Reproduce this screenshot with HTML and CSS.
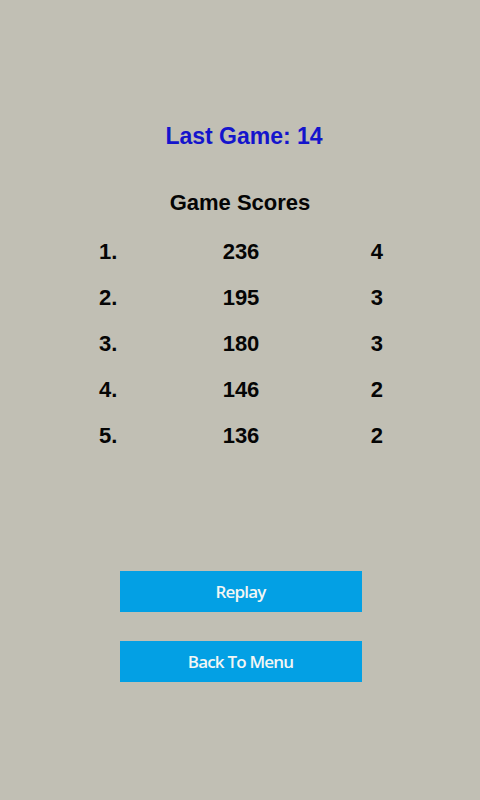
FILE: index.html
```html
<!DOCTYPE html>
<html lang="en">
<head>
  <meta charset="UTF-8">
  <meta name="viewport" content="width=device-width, initial-scale=1.0">
  <title>Game Over</title>
  <link rel="stylesheet" href="styles.css">
</head>
<body>
  <div class="screen">
    <div class="last-game">Last Game: 14</div>
    <div class="scores-title">Game Scores</div>
    <div class="scores">
      <span class="rank">1.</span><span class="points">236</span><span class="level">4</span>
      <span class="rank">2.</span><span class="points">195</span><span class="level">3</span>
      <span class="rank">3.</span><span class="points">180</span><span class="level">3</span>
      <span class="rank">4.</span><span class="points">146</span><span class="level">2</span>
      <span class="rank">5.</span><span class="points">136</span><span class="level">2</span>
    </div>
    <div class="buttons">
      <button class="btn">Replay</button>
      <button class="btn">Back To Menu</button>
    </div>
  </div>
</body>
</html>
```

FILE: styles.css
```css
body {
  margin: 0;
  background: #c1bfb4;
  font-family: 'Liberation Sans', Arial, sans-serif;
  font-weight: 700;
  color: #050505;
}
.screen {
  display: flex;
  flex-direction: column;
  align-items: center;
  padding-top: 121px;
  height: 800px;
  box-sizing: border-box;
}
.last-game {
  color: #1414cc;
  font-size: 23px;
  line-height: 30px;
  margin-left: 8px;
}
.scores-title {
  font-size: 22px;
  line-height: 30px;
  margin-top: 37px;
}
.scores {
  display: grid;
  grid-template-columns: 1fr auto 1fr;
  width: 284px;
  margin-top: 11px;
  margin-left: 2px;
  font-size: 22px;
  line-height: 46px;
}
.rank { justify-self: start; }
.points { justify-self: center; }
.level { justify-self: end; }
.buttons {
  display: flex;
  flex-direction: column;
  gap: 29px;
  margin-top: 112px;
  margin-left: 1px;
}
.btn {
  width: 242px;
  height: 41px;
  border: none;
  background: #03a0e4;
  color: #f2f6f4;
  font-family: 'Open Sans', sans-serif;
  font-size: 17px;
  font-weight: 600;
  letter-spacing: -0.8px;
  padding: 0;
}
```
